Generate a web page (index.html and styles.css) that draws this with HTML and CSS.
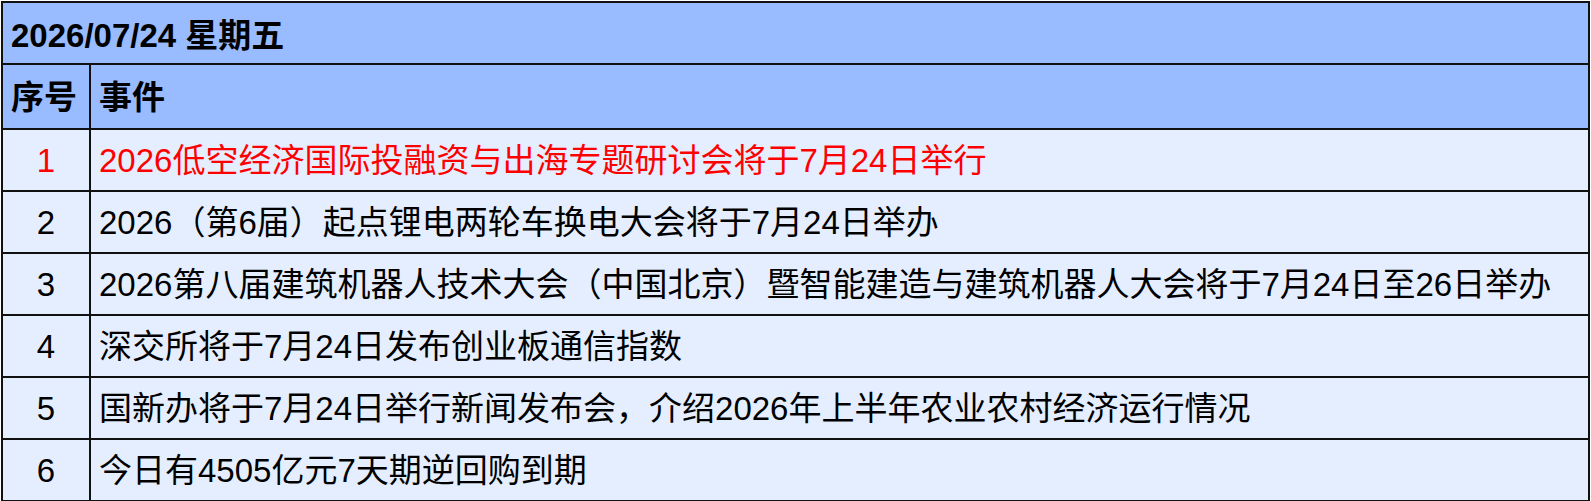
FILE: index.html
```html
<!DOCTYPE html>
<html lang="zh-CN">
<head>
<meta charset="utf-8">
<title>2026/07/24 星期五</title>
<link rel="stylesheet" href="styles.css">
</head>
<body>
<table class="events">
  <colgroup>
    <col class="c-no">
    <col class="c-ev">
  </colgroup>
  <thead>
    <tr class="title-row"><th colspan="2" class="title">2026/07/24 星期五</th></tr>
    <tr class="head-row"><th class="col-no">序号</th><th class="col-ev">事件</th></tr>
  </thead>
  <tbody>
    <tr class="hl"><td class="no">1</td><td class="ev">2026低空经济国际投融资与出海专题研讨会将于7月24日举行</td></tr>
    <tr><td class="no">2</td><td class="ev">2026（第6届）起点锂电两轮车换电大会将于7月24日举办</td></tr>
    <tr><td class="no">3</td><td class="ev">2026第八届建筑机器人技术大会（中国北京）暨智能建造与建筑机器人大会将于7月24日至26日举办</td></tr>
    <tr><td class="no">4</td><td class="ev">深交所将于7月24日发布创业板通信指数</td></tr>
    <tr><td class="no">5</td><td class="ev">国新办将于7月24日举行新闻发布会，介绍2026年上半年农业农村经济运行情况</td></tr>
    <tr><td class="no">6</td><td class="ev">今日有4505亿元7天期逆回购到期</td></tr>
  </tbody>
</table>
</body>
</html>
```

FILE: styles.css
```css
html, body {
  margin: 0;
  padding: 0;
  background: #ffffff;
}

body {
  padding: 1px 0 0 1px;
  font-family: "Liberation Sans", Arial, "Noto Sans CJK SC", sans-serif;
  font-size: 33px;
  color: #000000;
}

.events {
  border-collapse: collapse;
  width: 1589px;
  border: 2px solid #111111;
  table-layout: fixed;
}

.c-no {
  width: 88px;
}

.events th,
.events td {
  border: 2px solid #111111;
  padding: 0 8px;
  vertical-align: middle;
  white-space: nowrap;
  overflow: hidden;
  line-height: 1;
}

.title-row th,
.head-row th {
  background: #99bbff;
  font-weight: bold;
  text-align: left;
}

.title-row th {
  height: 56px;
  padding-top: 4px;
  padding-left: 8px;
}

.head-row th {
  height: 61px;
  padding-top: 2px;
}

.col-no {
  padding-left: 9px;
}

.events tbody td {
  background: #e5eeff;
  height: 60px;
}

.no {
  text-align: center;
}

.ev {
  text-align: left;
}

.hl td {
  color: #ff0000;
}
```
